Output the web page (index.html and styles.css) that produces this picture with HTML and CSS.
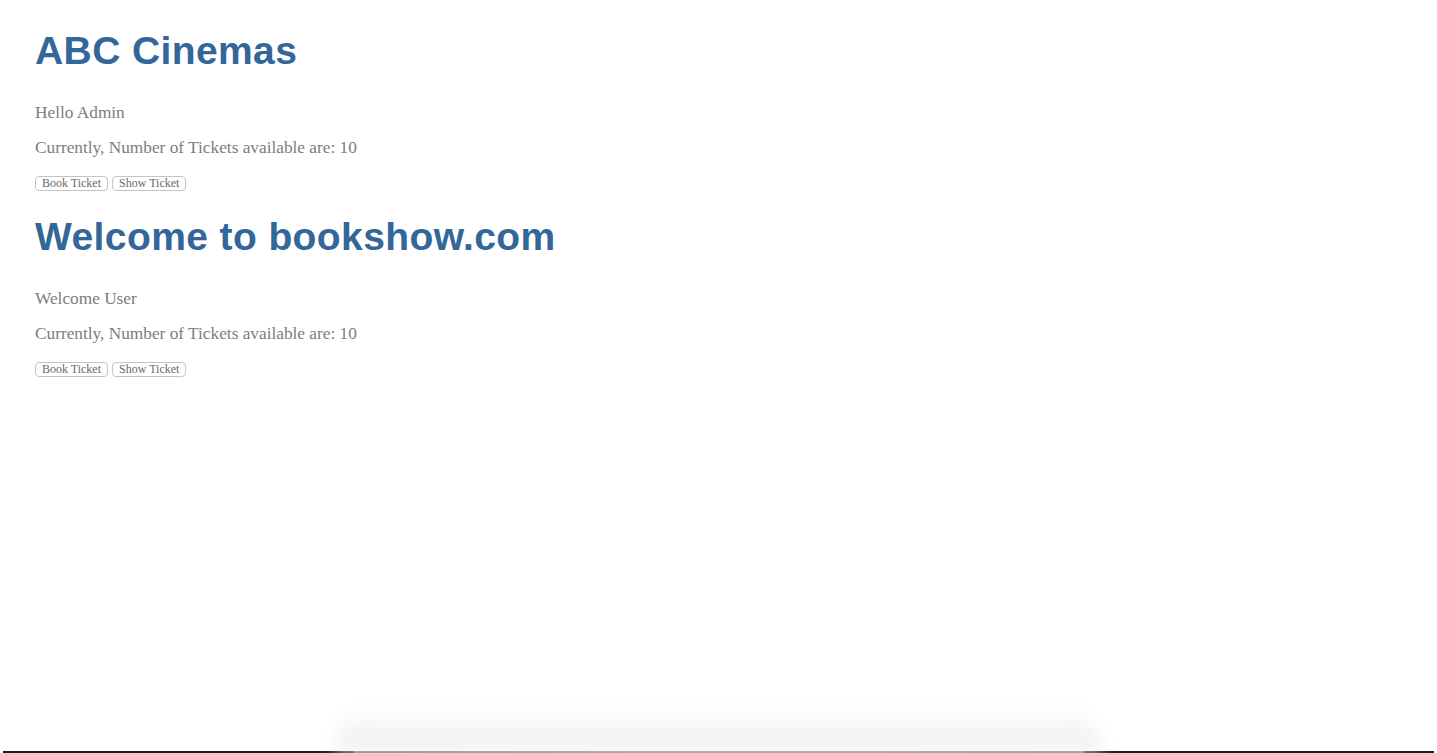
FILE: index.html
```html
<!DOCTYPE html>
<html>
<head>
<meta charset="utf-8">
<title>ABC Cinemas</title>
<link rel="stylesheet" href="styles.css">
</head>
<body>
<div class="page">
  <main class="content">
    <section class="block">
      <h1 class="title">ABC Cinemas</h1>
      <p class="line">Hello Admin</p>
      <p class="line">Currently, Number of Tickets available are: 10</p>
      <div class="actions">
        <button class="btn">Book Ticket</button>
        <button class="btn">Show Ticket</button>
      </div>
    </section>
    <section class="block">
      <h1 class="title">Welcome to bookshow.com</h1>
      <p class="line">Welcome User</p>
      <p class="line">Currently, Number of Tickets available are: 10</p>
      <div class="actions">
        <button class="btn">Book Ticket</button>
        <button class="btn">Show Ticket</button>
      </div>
    </section>
  </main>
  <footer class="edge">
    <div class="shade"></div>
    <div class="rim"><div class="rim-mid"></div></div>
  </footer>
</div>
</body>
</html>
```
FILE: styles.css
```css
html, body {
  margin: 0;
  padding: 0;
  background: #ffffff;
}
.page {
  height: 753px;
  display: flex;
  flex-direction: column;
  overflow: hidden;
}
.content {
  flex: 1;
  padding: 29px 0 0 35px;
}
.block {
  margin: 0 0 24px 0;
}
.title {
  margin: 0 0 30px 0;
  font-family: "Liberation Sans", Arial, sans-serif;
  font-weight: bold;
  font-size: 39px;
  line-height: 44px;
  letter-spacing: 0.4px;
  color: #336699;
}
.line {
  margin: 0 0 15px 0;
  font-family: "Liberation Serif", Georgia, serif;
  font-size: 17.3px;
  line-height: 20px;
  color: #7d7d7d;
}
.actions {
  display: flex;
  gap: 4px;
  margin-top: 18px;
}
.btn {
  font-family: "Liberation Serif", Georgia, serif;
  font-size: 12px;
  line-height: 13px;
  color: #6a6a6a;
  background: #ffffff;
  border: 1px solid #c4c4c4;
  border-radius: 4px;
  padding: 0 6px;
  height: 15px;
}
.edge {
  height: 52px;
  display: flex;
  flex-direction: column;
}
.shade {
  flex: 1;
  margin: 0 335px;
  border-radius: 50px 50px 0 0;
  background: linear-gradient(to bottom, rgba(244,244,244,0) 0%, rgba(242,242,242,0.7) 55%, #efefef 100%);
  filter: blur(8px);
}
.rim {
  height: 2px;
  margin: 0 3px;
  background: #1e1e1e;
  display: flex;
  justify-content: center;
}
.rim-mid {
  width: 730px;
  background: linear-gradient(to right, #6b6259, #9a7a55, #7a6a5a);
}
```
